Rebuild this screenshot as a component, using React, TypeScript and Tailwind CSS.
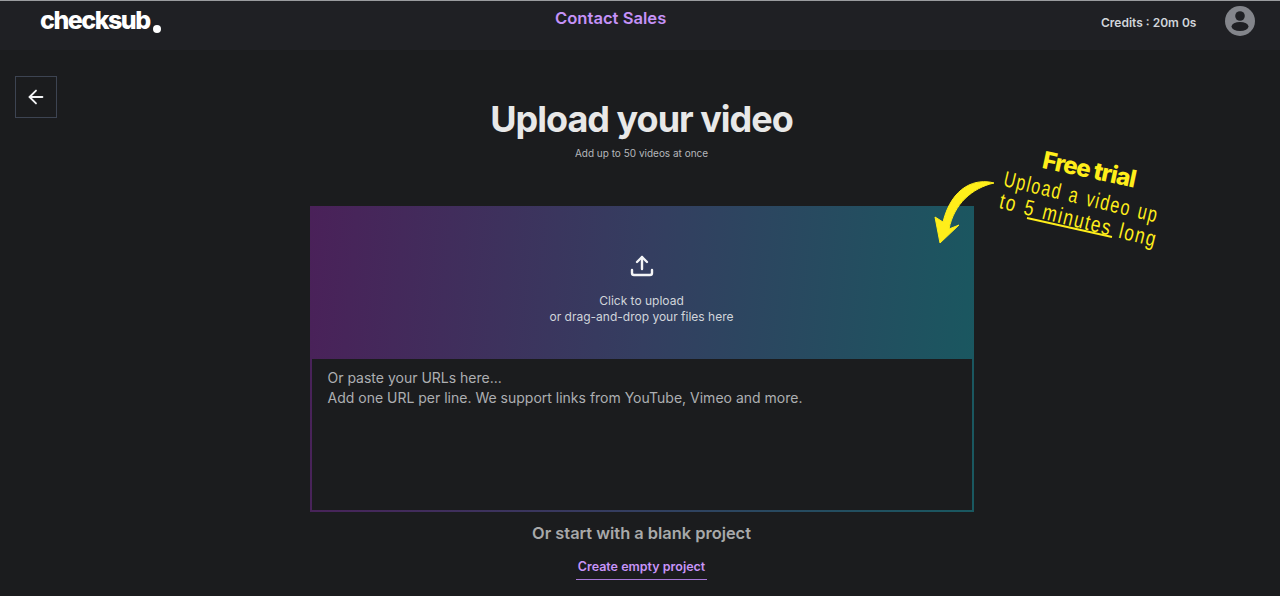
import { ArrowLeft } from "lucide-react";

function Hand({ children, className }: { children: string; className: string }) {
  return (
    <span className={`absolute origin-left whitespace-nowrap text-[22px] leading-[24px] tracking-[2px] text-[#ffee1a] [font-family:'Liberation_Sans',sans-serif] [word-spacing:2px] ${className}`}>
      {children}
    </span>
  );
}

export default function App() {
  return (
    <div className="h-[596px] w-[1280px] overflow-hidden bg-[#1b1c1e] [font-family:Inter,sans-serif]">
      <header className="flex h-[50px] items-start border-t border-[#9a9c9f] bg-[#1f2024]">
        <div className="w-[40px]" />
        <div className="relative mt-[3px] w-[112px] text-[25px] leading-[32px] font-extrabold tracking-[-1.5px] whitespace-nowrap text-white">
          checksub
          <span className="absolute bottom-[3px] right-[-9px] h-[8px] w-[8px] rounded-full bg-white" />
        </div>
        <div className="ml-[403px] mt-[7px] w-[112px] text-[16.6px] leading-5 font-semibold whitespace-nowrap text-[#c592f8]">Contact Sales</div>
        <div className="ml-[434px] mt-[14px] w-[96px] text-[12px] leading-4 font-semibold whitespace-nowrap text-[#d1d5db]">Credits : 20m 0s</div>
        <svg className="ml-[28px] mt-[5px] h-[30px] w-[30px]" viewBox="0 0 30 30">
          <circle cx="15" cy="15" r="15" fill="#83858b" />
          <circle cx="15" cy="10" r="4.8" fill="#1f2024" />
          <ellipse cx="15" cy="20.5" rx="8.5" ry="4.6" fill="#1f2024" />
        </svg>
      </header>

      <main className="relative">
        <div className="absolute left-[15px] top-[26px] flex h-[42px] w-[42px] items-center justify-center border border-[#3d4452] text-[#f3f4f6]">
          <ArrowLeft size={22} strokeWidth={2} />
        </div>

        <div className="flex flex-col items-center pl-[3px]">
          <h1 className="mt-[49px] text-[36px] leading-[40px] font-bold tracking-[-1px] text-[#e8e8e8]">Upload your video</h1>
          <p className="mt-[7px] text-[10px] leading-[14px] text-[#b5b7bb]">Add up to 50 videos at once</p>

          <section className="mt-[46px] w-[664px] bg-[linear-gradient(95deg,#4a2159_0%,#343e60_50%,#195860_100%)] p-[2px] pt-0">
            <div className="flex h-[153px] flex-col items-center text-[#d1d5db]">
              <svg className="mt-[48px] h-[24px] w-[24px]" viewBox="0 0 24 24" fill="none" stroke="#f3f4f6" strokeWidth="2.4" strokeLinecap="round" strokeLinejoin="round">
                <path d="M12 15V3" />
                <path d="M7 8 12 3 17 8" />
                <path d="M2 16v3a2 2 0 0 0 2 2h16a2 2 0 0 0 2-2v-3" />
              </svg>
              <p className="mt-[15px] text-center text-[12px] leading-[16px]">
                Click to upload
                <br />
                or drag-and-drop your files here
              </p>
            </div>
            <div className="h-[151px] bg-[#1b1c1e] px-[16px] pt-[9px] text-[14px] leading-[20px] text-[#adafb2]">
              Or paste your URLs here...
              <br />
              Add one URL per line. We support links from YouTube, Vimeo and more.
            </div>
          </section>

          <h2 className="mt-[9px] text-[16.4px] leading-6 font-semibold text-[#a8a9aa]">Or start with a blank project</h2>
          <div className="mt-[13px] border-b border-[#a879d8] px-[2px] pb-[3px] text-[12.5px] leading-[18px] font-semibold text-[#c794f9]">
            Create empty project
          </div>
        </div>

        {/* Free trial annotation */}
        <div className="absolute left-0 top-0">
          <span className="absolute left-[1043px] top-[96px] origin-left rotate-[12deg] whitespace-nowrap text-[24px] leading-[28px] font-extrabold tracking-[-1px] text-[#ffee1a]">
            Free trial
          </span>
          <Hand className="left-[1004px] top-[117px] rotate-[13.4deg] scale-x-[0.73]">Upload a video up</Hand>
          <Hand className="left-[1000px] top-[139px] rotate-[14deg] scale-x-[0.78]">to 5 minutes long</Hand>
          <svg className="absolute left-[930px] top-[128px] h-[70px] w-[240px]" viewBox="0 0 240 70" fill="none">
            <path d="M64 5C46 0 22 8 13 44L5 39L10 65L29 47L19 51C24 26 42 10 64 5Z" fill="#ffee1a" stroke="#ffee1a" strokeWidth="1" strokeLinejoin="round" />
            <path d="M97 40L182 59" stroke="#ffee1a" strokeWidth="2" />
          </svg>
        </div>
      </main>
    </div>
  );
}
